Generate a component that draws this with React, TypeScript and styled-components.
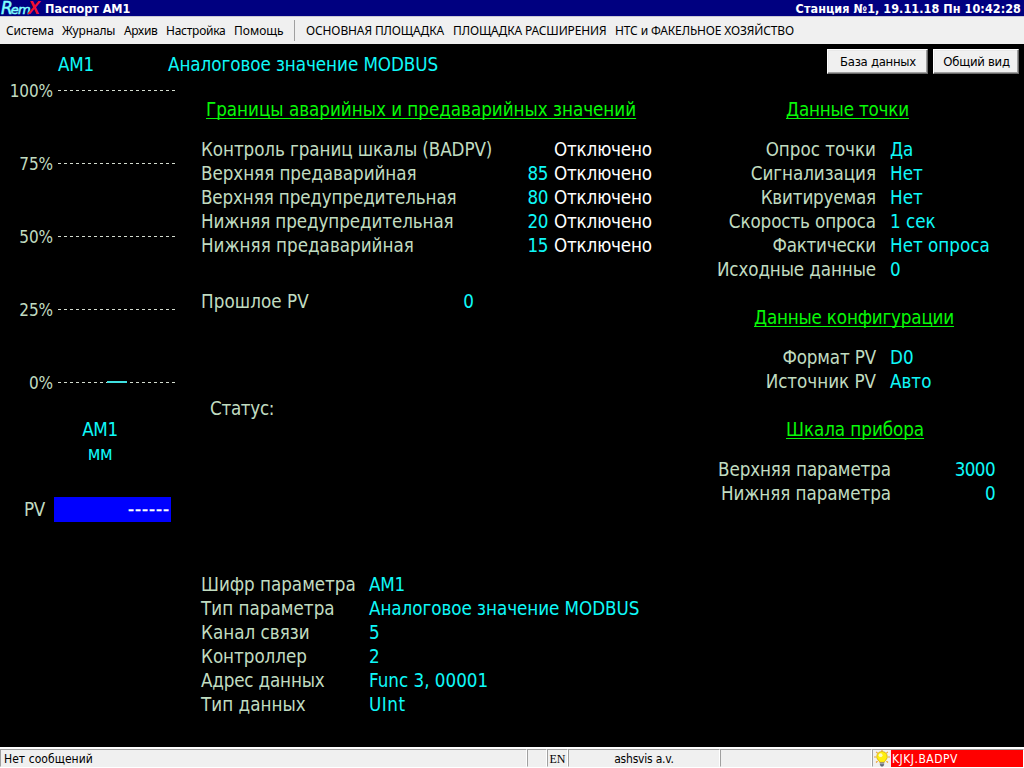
import React from "react";
import styled, { createGlobalStyle } from "styled-components";

const UI = `"DejaVu Sans Condensed", "DejaVu Sans", Tahoma, sans-serif`;
const MENU = `"Noto Sans", "Segoe UI", sans-serif`;
const LABEL = "#c0dcc0";
const VALUE = "#0ff8f8";
const HEADING = "#08f808";

const GlobalStyle = createGlobalStyle`
  *, *::before, *::after { box-sizing: border-box; }
  html, body { margin: 0; padding: 0; background: #000; overflow: hidden; }
`;

const Window = styled.div`
  width: 1024px;
  height: 768px;
  display: flex;
  flex-direction: column;
  background: #000;
  font-family: ${UI};
  font-size: 18.67px;
  line-height: 24px;
  white-space: nowrap;
`;

const TitleBar = styled.header`
  height: 17px;
  display: flex;
  align-items: flex-start;
  padding-right: 3px;
  background: #000080;
  border-bottom: 1px solid #c8c8d4;
  color: #fff;
  font-size: 12.5px;
  font-weight: 700;
  line-height: 18px;
`;

const Logo = styled.div`
  width: 45px;
  height: 16px;
  display: flex;
  align-items: baseline;
  padding-left: 1px;
  font-style: italic;
  line-height: 17px;
`;

const LogoR = styled.span`
  font-family: "DejaVu Sans", sans-serif;
  font-size: 17px;
  font-weight: 400;
  color: #7fffff;
  letter-spacing: -2px;
  -webkit-text-stroke: 0.5px #7fffff;
`;

const LogoEm = styled(LogoR)`
  font-size: 13px;
  letter-spacing: -0.8px;
`;

const LogoX = styled.span`
  font-family: "Liberation Sans", sans-serif;
  font-size: 18px;
  font-weight: 700;
  color: #f01030;
  margin-left: -2px;
`;

const Title = styled.span`
  letter-spacing: 0;
`;

const Station = styled.span`
  margin-left: auto;
  letter-spacing: 0.06px;
`;

const MenuBar = styled.nav`
  height: 27px;
  display: flex;
  align-items: center;
  padding-left: 6px;
  background: #f0f0f0;
  color: #000;
  font-family: ${MENU};
  font-size: 12px;
  line-height: 27px;
`;

const MenuItem = styled.span<{ $w: number; $ls?: number }>`
  width: ${(p) => p.$w}px;
  letter-spacing: ${(p) => p.$ls ?? 0}px;
`;

const MenuSeparator = styled.span`
  width: 12px;
  height: 21px;
  border-left: 1px solid #a0a0a0;
`;

const Main = styled.main`
  height: 703px;
  display: flex;
  padding-top: 9px;
`;

const LeftColumn = styled.section`
  width: 168px;
  display: flex;
  flex-direction: column;
`;

const CenterColumn = styled.section`
  width: 532px;
  display: flex;
  flex-direction: column;
`;

const RightColumn = styled.section`
  flex: 1;
  display: flex;
  flex-direction: column;
`;

const PointName = styled.div`
  padding-left: 58px;
  height: 26px;
  color: ${VALUE};
  letter-spacing: -0.2px;
`;

const Scale = styled.div`
  width: 175px;
  height: 339px;
  position: relative;
`;

const ScaleRow = styled.div`
  height: 73px;
  display: flex;
  align-items: flex-start;
  gap: 5px;
`;

const ScaleLabel = styled.span`
  width: 53px;
  text-align: right;
  color: ${LABEL};
  font-size: 17px;
  letter-spacing: -0.1px;
`;

const ScaleLine = styled.span`
  flex: 1;
  height: 1px;
  margin-top: 11px;
  background: repeating-linear-gradient(90deg, #d4dcd0 0 3px, transparent 3px 6px);
`;

const ScaleMarker = styled.span`
  position: absolute;
  left: 107px;
  top: 302px;
  width: 20px;
  height: 2px;
  background: #40e0e0;
`;

const Caption = styled.div`
  width: 200px;
  text-align: center;
  color: ${VALUE};
  letter-spacing: -0.3px;
`;

const PvRow = styled.div`
  width: 171px;
  margin-top: 31px;
  display: flex;
`;

const PvLabel = styled.span`
  width: 54px;
  padding: 1px 0 0 24px;
  color: ${LABEL};
  letter-spacing: -0.4px;
`;

const PvValue = styled.span`
  flex: 1;
  height: 25px;
  padding: 1px 1px 0 0;
  background: #0000ff;
  color: #fff;
  text-align: right;
  letter-spacing: 0.93px;
  -webkit-text-stroke: 0.3px #fff;
`;

const Description = styled.div`
  color: ${VALUE};
  letter-spacing: -0.06px;
`;

const Heading = styled.h2<{ $x: number; $top: number; $ls?: number }>`
  margin: ${(p) => p.$top}px 0 16px ${(p) => p.$x}px;
  color: ${HEADING};
  font-size: inherit;
  font-weight: 400;
  line-height: 24px;
  letter-spacing: ${(p) => p.$ls ?? 0}px;
  text-decoration: underline;
  text-decoration-thickness: 1px;
  text-underline-offset: 2px;
  text-decoration-skip-ink: none;
`;

const Block = styled.div<{ $top?: number; $x?: number }>`
  margin-top: ${(p) => p.$top ?? 0}px;
  padding-left: ${(p) => p.$x ?? 0}px;
`;

const Row = styled.div`
  height: 24px;
  display: flex;
`;

const Label = styled.span<{ $w?: number; $right?: boolean; $ls?: number }>`
  width: ${(p) => (p.$w ? `${p.$w}px` : "auto")};
  text-align: ${(p) => (p.$right ? "right" : "left")};
  letter-spacing: ${(p) => (p.$ls ?? 0) - 0.06}px;
  color: ${LABEL};
`;

const Value = styled.span<{ $w?: number; $gap?: number; $ls?: number }>`
  width: ${(p) => (p.$w ? `${p.$w}px` : "auto")};
  margin-left: ${(p) => p.$gap ?? 0}px;
  text-align: ${(p) => (p.$w ? "right" : "left")};
  letter-spacing: ${(p) => p.$ls ?? 0}px;
  color: ${VALUE};
`;

const State = styled.span`
  margin-left: 6px;
  color: #fff;
  letter-spacing: -0.18px;
`;

const ButtonRow = styled.div`
  display: flex;
  justify-content: flex-end;
  gap: 5px;
  height: 25px;
  margin-top: -4px;
  padding-right: 5px;
`;

const Button = styled.button<{ $w: number }>`
  width: ${(p) => p.$w}px;
  height: 25px;
  flex: none;
  padding: 0 0 0 1px;
  border: 1px solid;
  border-color: #fff #696969 #696969 #fff;
  border-radius: 0;
  box-shadow: inset -1px -1px 0 #a0a0a0, inset 1px 1px 0 #e8e8e8;
  background: #f0f0f0;
  color: #000;
  font-family: ${UI};
  font-size: 13px;
  letter-spacing: -0.28px;
  line-height: 23px;
`;

const StatusBar = styled.footer`
  height: 21px;
  display: flex;
  padding-top: 2px;
  background: #fff;
  color: #000;
  font-size: 12px;
  line-height: 18px;
`;

const StatusPanel = styled.div<{ $w?: number; $center?: boolean }>`
  ${(p) => (p.$w ? `width: ${p.$w}px;` : "flex: 1;")}
  height: 18px;
  display: flex;
  align-items: stretch;
  justify-content: ${(p) => (p.$center ? "center" : "flex-start")};
  border: 1px solid;
  border-color: #a0a0a0 #fff #f0f0f0 #a0a0a0;
  background: #f0f0f0;
`;

const Message = styled.span`
  padding-left: 3px;
  letter-spacing: 0.05px;
`;

const Language = styled.span`
  font-family: "Liberation Serif", "Times New Roman", serif;
  font-size: 12px;
`;

const User = styled.span`
  letter-spacing: -0.2px;
`;

const BulbIcon = styled.svg`
  width: 18px;
  height: 17px;
  flex: none;
`;

const Alarm = styled.span`
  flex: 1;
  height: 17px;
  padding-left: 1px;
  background: #ff0000;
  color: #fff;
  letter-spacing: 0.5px;
`;

const sections = [
  { text: "Система", w: 56, ls: -0.2 },
  { text: "Журналы", w: 62, ls: -0.15 },
  { text: "Архив", w: 42, ls: -0.3 },
  { text: "Настройка", w: 68, ls: -0.25 },
  { text: "Помощь", w: 60, ls: 0 },
];

const areas = [
  { text: "ОСНОВНАЯ ПЛОЩАДКА", w: 147, ls: -0.12 },
  { text: "ПЛОЩАДКА РАСШИРЕНИЯ", w: 162, ls: -0.14 },
  { text: "НТС и ФАКЕЛЬНОЕ ХОЗЯЙСТВО", w: 190, ls: -0.13 },
];

const limits = [
  { label: "Контроль границ шкалы (BADPV)", value: "", ls: -0.03 },
  { label: "Верхняя предаварийная", value: "85", ls: 0 },
  { label: "Верхняя предупредительная", value: "80", ls: -0.08 },
  { label: "Нижняя предупредительная", value: "20", ls: -0.05 },
  { label: "Нижняя предаварийная", value: "15", ls: 0.05 },
];

const pointData = [
  { label: "Опрос точки", value: "Да", ls: 0.03 },
  { label: "Сигнализация", value: "Нет", ls: 0 },
  { label: "Квитируемая", value: "Нет", ls: -0.12 },
  { label: "Скорость опроса", value: "1 сек", ls: -0.06 },
  { label: "Фактически", value: "Нет опроса", ls: -0.2 },
  { label: "Исходные данные", value: "0", ls: -0.06 },
];

const configData = [
  { label: "Формат PV", value: "D0", ls: -0.1 },
  { label: "Источник PV", value: "Авто", ls: 0.03 },
];

const deviceScale = [
  { label: "Верхняя параметра", value: "3000", ls: -0.05 },
  { label: "Нижняя параметра", value: "0", ls: 0 },
];

const parameter = [
  { label: "Шифр параметра", value: "АМ1", ls: 0.03, vls: -0.2 },
  { label: "Тип параметра", value: "Аналоговое значение MODBUS", ls: 0.08, vls: -0.05 },
  { label: "Канал связи", value: "5", ls: 0.06, vls: 0 },
  { label: "Контроллер", value: "2", ls: 0.02, vls: 0 },
  { label: "Адрес данных", value: "Func 3, 00001", ls: -0.12, vls: 0 },
  { label: "Тип данных", value: "UInt", ls: 0.08, vls: 0.5 },
];

function Bulb() {
  return (
    <BulbIcon viewBox="0 0 18 17">
      <g stroke="#f0a030" strokeWidth="1.2">
        <path d="M9 0v1.5M3.2 1.8l1.5 1.5M14.8 1.8l-1.5 1.5M1 7h2M15 7h2M3 12.5l1.6-1.4M15 12.5l-1.6-1.4" />
      </g>
      <path
        d="M9 1.4a5.4 5.2 0 0 0-3.6 9c.8.7 1.2 1.1 1.2 1.9h4.8c0-.8.4-1.2 1.2-1.9A5.4 5.2 0 0 0 9 1.4z"
        fill="#ffee10"
        stroke="#c89800"
        strokeWidth=".6"
      />
      <circle cx="7.6" cy="5.2" r="1.9" fill="#fffcc0" />
      <path d="M6.9 12.4h4.2v2.6l-1.2 1.4H8.1L6.9 15z" fill="#606878" />
      <path d="M7 13.7h4" stroke="#d0d4dc" strokeWidth=".7" />
    </BulbIcon>
  );
}

export default function App() {
  return (
    <Window>
      <GlobalStyle />
      <TitleBar>
        <Logo>
          <LogoR>R</LogoR>
          <LogoEm>em</LogoEm>
          <LogoX>X</LogoX>
        </Logo>
        <Title>Паспорт АМ1</Title>
        <Station>Станция №1, 19.11.18 Пн 10:42:28</Station>
      </TitleBar>
      <MenuBar>
        {sections.map((m) => (
          <MenuItem key={m.text} $w={m.w} $ls={m.ls}>{m.text}</MenuItem>
        ))}
        <MenuSeparator />
        {areas.map((m) => (
          <MenuItem key={m.text} $w={m.w} $ls={m.ls}>{m.text}</MenuItem>
        ))}
      </MenuBar>
      <Main>
        <LeftColumn>
          <PointName>АМ1</PointName>
          <Scale>
            {[100, 75, 50, 25, 0].map((n) => (
              <ScaleRow key={n}>
                <ScaleLabel>{n}%</ScaleLabel>
                <ScaleLine />
              </ScaleRow>
            ))}
            <ScaleMarker />
          </Scale>
          <Caption>АМ1</Caption>
          <Caption>мм</Caption>
          <PvRow>
            <PvLabel>PV</PvLabel>
            <PvValue>------</PvValue>
          </PvRow>
        </LeftColumn>
        <CenterColumn>
          <Description>Аналоговое значение MODBUS</Description>
          <Heading $x={38} $top={21} $ls={-0.02}>Границы аварийных и предаварийных значений</Heading>
          <Block $x={33}>
            {limits.map((r) => (
              <Row key={r.label}>
                <Label $w={309} $ls={r.ls}>{r.label}</Label>
                <Value $w={38} $ls={-0.4}>{r.value}</Value>
                <State>Отключено</State>
              </Row>
            ))}
          </Block>
          <Block $x={33} $top={32}>
            <Row>
              <Label $w={236} $ls={0.12}>Прошлое PV</Label>
              <Value $w={37}>0</Value>
            </Row>
          </Block>
          <Block $x={42} $top={83}>
            <Row>
              <Label $ls={-0.25}>Статус:</Label>
            </Row>
          </Block>
          <Block $x={33} $top={152}>
            {parameter.map((r) => (
              <Row key={r.label}>
                <Label $w={168} $ls={r.ls}>{r.label}</Label>
                <Value $ls={r.vls}>{r.value}</Value>
              </Row>
            ))}
          </Block>
        </CenterColumn>
        <RightColumn>
          <ButtonRow>
            <Button $w={101}>База данных</Button>
            <Button $w={86}>Общий вид</Button>
          </ButtonRow>
          <Heading $x={86} $top={24} $ls={-0.19}>Данные точки</Heading>
          {pointData.map((r) => (
            <Row key={r.label}>
              <Label $w={176} $right $ls={r.ls}>{r.label}</Label>
              <Value $gap={14}>{r.value}</Value>
            </Row>
          ))}
          <Heading $x={54} $top={24} $ls={-0.2}>Данные конфигурации</Heading>
          {configData.map((r) => (
            <Row key={r.label}>
              <Label $w={176} $right $ls={r.ls}>{r.label}</Label>
              <Value $gap={14}>{r.value}</Value>
            </Row>
          ))}
          <Heading $x={86} $top={24} $ls={-0.06}>Шкала прибора</Heading>
          {deviceScale.map((r) => (
            <Row key={r.label}>
              <Label $w={191} $right $ls={r.ls}>{r.label}</Label>
              <Value $w={104} $ls={-0.6}>{r.value}</Value>
            </Row>
          ))}
        </RightColumn>
      </Main>
      <StatusBar>
        <StatusPanel $w={527}>
          <Message>Нет сообщений</Message>
        </StatusPanel>
        <StatusPanel $w={20} />
        <StatusPanel $w={21} $center>
          <Language>EN</Language>
        </StatusPanel>
        <StatusPanel $w={152} $center>
          <User>ashsvis a.v.</User>
        </StatusPanel>
        <StatusPanel $w={152} />
        <StatusPanel>
          <Bulb />
          <Alarm>KJKJ.BADPV</Alarm>
        </StatusPanel>
      </StatusBar>
    </Window>
  );
}
